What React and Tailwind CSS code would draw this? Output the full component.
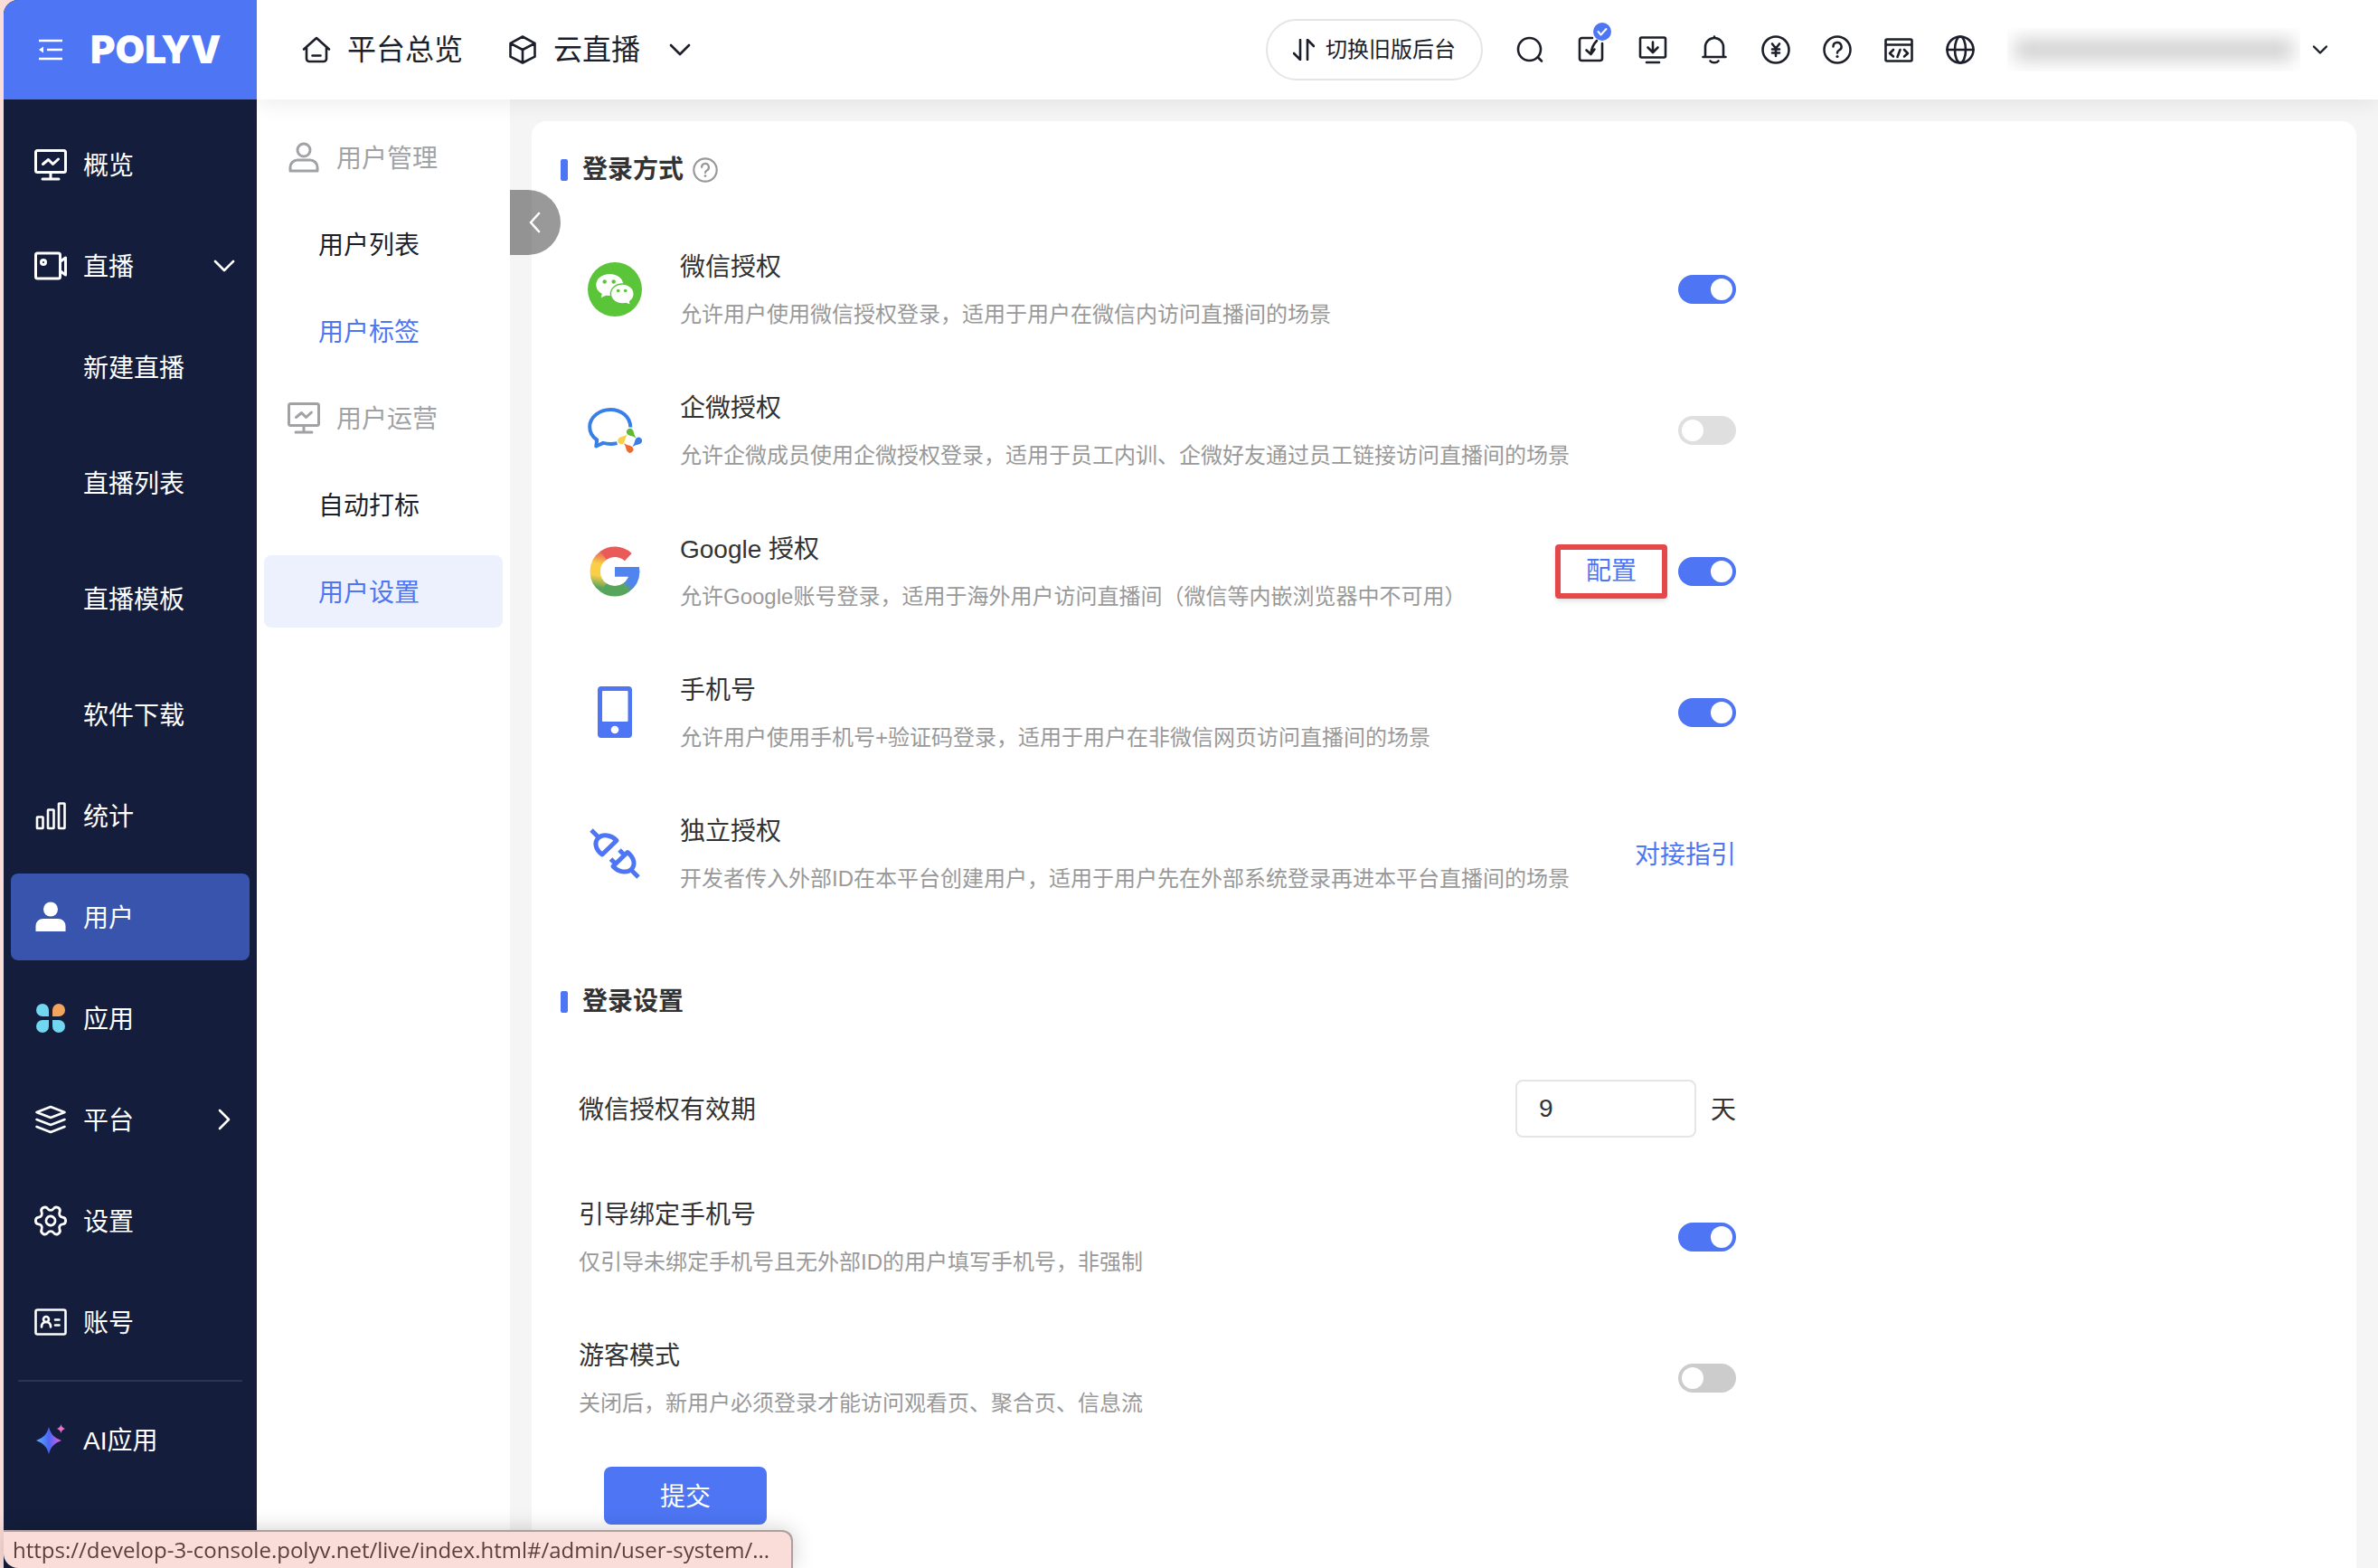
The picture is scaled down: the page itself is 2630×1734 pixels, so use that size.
import React from 'react';
import { Settings } from 'lucide-react';

const Icon = ({ size = 36, className = '', strokeWidth = 3, children }) => (
  <svg
    viewBox={`0 0 ${size} ${size}`}
    width={size}
    height={size}
    fill="none"
    stroke="currentColor"
    strokeWidth={strokeWidth}
    strokeLinecap="round"
    strokeLinejoin="round"
    className={`shrink-0 ${className}`}
    aria-hidden="true"
  >
    {children}
  </svg>
);

const BoardIcon = () => (
  <Icon>
    <rect x="1.5" y="2.5" width="33" height="24" rx="2" />
    <path d="M9.5 17.5l6-5 5 5 6-5.500M18 27v6M9 34h18" />
  </Icon>
);

const LiveIcon = () => (
  <Icon>
    <rect x="1.500" y="4" width="27" height="28" rx="2" />
    <circle cx="10" cy="14" r="2.500" />
    <path d="M29 13l5.500-4v19L29 24" />
  </Icon>
);

const StatsIcon = () => (
  <Icon strokeWidth={2.6}>
    <rect x="3" y="19.500" width="6.500" height="12.500" rx=".5" />
    <rect x="15" y="11.500" width="6.500" height="20.500" rx=".5" />
    <rect x="27" y="4.500" width="6.500" height="27.500" rx=".5" />
  </Icon>
);

const UserFilledIcon = () => (
  <Icon>
    <g fill="currentColor" stroke="none">
      <circle cx="18" cy="9.500" r="8" />
      <path d="M1.500 34v-6a8 8 0 0 1 8-8h17a8 8 0 0 1 8 8v6z" />
    </g>
  </Icon>
);

const UserIcon = () => (
  <Icon>
    <circle cx="18" cy="10" r="7" />
    <path d="M3 33v-4a8 8 0 0 1 8-8h14a8 8 0 0 1 8 8v4z" />
  </Icon>
);

const AppsIcon = () => (
  <Icon>
    <g stroke="none" fill="#71d6f0">
      <path d="M16 16H9a7 7 0 1 1 7-7z" />
      <path d="M20 16h7a7 7 0 1 0-7-7z" fill="#f2a35e" />
      <path d="M16 20H9a7 7 0 1 0 7 7z" />
      <path d="M20 20h7a7 7 0 1 1-7 7z" />
    </g>
  </Icon>
);

const PlatformIcon = () => (
  <Icon strokeWidth={2.6}>
    <path d="M18 4l15.500 6L18 16 2.500 10z" />
    <path d="M2.500 18L18 24l15.500-6M2.500 26L18 32l15.500-6" />
  </Icon>
);

const SettingIcon = () => (
  <Settings size={40} strokeWidth={1.7} className="-mx-0.5 shrink-0 rotate-30" aria-hidden="true" />
);

const AccountIcon = () => (
  <Icon strokeWidth={2.6}>
    <rect x="1.500" y="4.500" width="33" height="27" rx="2" />
    <circle cx="13" cy="15" r="3" />
    <path d="M8 23.500c0-3.500 2-5.500 5-5.500s5 2 5 5.500M23 15.500h4.500M23 21.500h4.500" />
  </Icon>
);

const AiIcon = () => (
  <Icon>
    <defs>
      <linearGradient id="ai-star" x1="0" y1="0" x2="1" y2="0">
        <stop offset="0" stopColor="#5fb0ff" />
        <stop offset=".5" stopColor="#4a66f5" />
        <stop offset="1" stopColor="#e85be0" />
      </linearGradient>
    </defs>
    <g stroke="none">
      <path d="M16 4c2 8 6 12 14 15-8 3-12 7-14 15-2-8-6-12-14-15C10 16 14 12 16 4z" fill="url(#ai-star)" />
      <path d="M29.500 1c.9 3.200 1.800 4.100 5 5-3.200.9-4.100 1.800-5 5-.9-3.200-1.800-4.100-5-5 3.200-.9 4.100-1.800 5-5z" fill="#ee6fc8" />
    </g>
  </Icon>
);

const ChevronDown = () => (
  <Icon size={24} strokeWidth={2.6}>
    <path d="M2 7l10 10L22 7" />
  </Icon>
);

const ChevronRight = () => (
  <Icon size={24} strokeWidth={2.6}>
    <path d="M7 2l10 10L7 22" />
  </Icon>
);

const QuestionIcon = ({ size = 32, className }) => (
  <svg viewBox="0 0 32 32" width={size} height={size} fill="none" stroke="currentColor" strokeWidth="2.500" strokeLinecap="round" className={className} aria-hidden="true">
    <circle cx="16" cy="16" r="14.500" />
    <path d="M11.500 12.500a4.500 4.500 0 1 1 6.500 4c-1.500.8-2 1.500-2 3" />
    <circle cx="16" cy="23.500" r="1.600" fill="currentColor" stroke="none" />
  </svg>
);

const toolbar = [
  {
    label: '搜索',
    icon: (
      <>
        <circle cx="15.500" cy="15.500" r="12.500" />
        <path d="M25 24.500l4 4" />
      </>
    ),
  },
  {
    label: '待办',
    icon: (
      <>
        <path d="M17 3H5.500A2.500 2.500 0 0 0 3 5.500v20A2.500 2.500 0 0 0 5.500 28h20a2.500 2.500 0 0 0 2.500-2.500V9" />
        <path d="M22 6c-4 4-6 8-6.500 15M10.500 16.500l5 4.500 4-5.500" />
      </>
    ),
    badge: true,
  },
  {
    label: '下载',
    icon: (
      <>
        <rect x="2" y="2.500" width="28" height="22" rx="1.500" />
        <path d="M16 7.500v11M10.500 13.500L16 19l5.500-5.500M9 30h14" />
      </>
    ),
  },
  {
    label: '消息',
    icon: (
      <>
        <path d="M6 24V13a10 10 0 0 1 20 0v11M3.500 24h25" />
        <path d="M11.500 28.500c2 2.300 7 2.300 9 0M16 1.500v1" />
      </>
    ),
  },
  {
    label: '费用',
    icon: (
      <>
        <circle cx="16" cy="16" r="14.500" />
        <path d="M12 9.500l4 5 4-5M16 14.500V23M12 15.500h8M12 19.500h8" />
      </>
    ),
  },
  { label: '帮助', node: <QuestionIcon /> },
  {
    label: '开发',
    icon: (
      <>
        <rect x="1.500" y="4.500" width="29" height="24" rx="1.500" />
        <path d="M2 10.500h28M10 16l-4 4 4 3.500M22 16l4 4-4 3.500M17.500 16l-3 8" />
      </>
    ),
  },
  {
    label: '语言',
    icon: (
      <>
        <circle cx="16" cy="16" r="14.500" />
        <ellipse cx="16" cy="16" rx="6" ry="14.500" />
        <path d="M1.500 16h29" />
      </>
    ),
  },
];

const WechatLogo = () => (
  <Icon size={60}>
    <g stroke="none">
      <circle cx="30" cy="30" r="30" fill="#5bc53a" />
      <path d="M14.700 39.300l1.500-6.300 6 2.800z" fill="#fff" />
      <ellipse cx="24.300" cy="25" rx="15" ry="12" fill="#fff" />
      <ellipse cx="38.300" cy="35" rx="13.600" ry="11.700" fill="#5bc53a" />
      <ellipse cx="38.300" cy="35" rx="12.200" ry="10.300" fill="#fff" />
      <path d="M46.500 46.300l-6-2 5-3z" fill="#fff" />
      <g fill="#5bc53a">
        <circle cx="18.700" cy="21.500" r="2.200" />
        <circle cx="28.700" cy="21.500" r="2.200" />
        <circle cx="33.700" cy="31.500" r="1.800" />
        <circle cx="41.700" cy="31.500" r="1.800" />
      </g>
    </g>
  </Icon>
);

const Drop = ({ x, y, angle, color }) => (
  <path
    d="M-3.700 0a3.700 3.700 0 0 1 7.400 0C3.700 3 1.200 4 0 9.800-1.200 4-3.700 3-3.700 0z"
    transform={`translate(${x} ${y}) rotate(${angle})`}
    fill={color}
    stroke="none"
  />
);

const WecomLogo = () => (
  <Icon size={60}>
    <path
      d="M47.300 26.500C47 14.500 37 7 25 7S2.200 15.500 2.200 26c0 6 3 11 8 14.500L9.300 47.500l7.700-3.600c5.500 1.300 10.500 1.300 15.500.2"
      stroke="#3880e8"
      strokeWidth="4"
      strokeLinecap="butt"
    />
    <Drop x={46.7} y={31.7} angle={-45} color="#5fba33" />
    <Drop x={56.3} y={41.3} angle={45} color="#3880e8" />
    <Drop x={46.7} y={51} angle={135} color="#ed6c2b" />
    <Drop x={37} y={41.3} angle={-135} color="#f9cf48" />
  </Icon>
);

const GoogleLogo = () => (
  <Icon size={60}>
    <defs>
      <linearGradient id="g-left" gradientUnits="userSpaceOnUse" x1="30" y1="10" x2="22" y2="50">
        <stop offset="0" stopColor="#ea5a59" />
        <stop offset=".36" stopColor="#f9cf48" />
        <stop offset=".68" stopColor="#f9cf48" />
        <stop offset="1" stopColor="#57a45c" />
      </linearGradient>
      <linearGradient id="g-right" gradientUnits="userSpaceOnUse" x1="41" y1="50" x2="47" y2="43">
        <stop offset="0" stopColor="#57a45c" />
        <stop offset="1" stopColor="#5084ee" />
      </linearGradient>
    </defs>
    <g strokeWidth="11.400" strokeLinecap="butt">
      <path d="M17.500 12.200A21.700 21.700 0 0 0 17.500 47.800" stroke="url(#g-left)" />
      <path d="M44.800 14.100A21.700 21.700 0 0 0 17.200 12.400" stroke="#ea5a59" />
      <path d="M17.200 47.600A21.700 21.700 0 0 0 42.700 47.600" stroke="#57a45c" />
      <path d="M42.400 47.800A21.700 21.700 0 0 0 51.700 30" stroke="url(#g-right)" />
    </g>
    <path d="M30 25h26.900l.5 5.500-5.400 5.200H30z" fill="#5084ee" stroke="none" />
  </Icon>
);

const PhoneLogo = () => (
  <Icon size={60}>
    <g stroke="none">
      <rect x="11" y="1" width="38" height="57" rx="4" fill="#4e76f4" />
      <rect x="16" y="6" width="28.500" height="34" rx="1" fill="#fff" />
      <circle cx="30" cy="49" r="4.300" fill="#fff" />
    </g>
  </Icon>
);

const PlugLogo = () => (
  <Icon size={60} className="text-[#4e76f4]" strokeWidth={5}>
    <g strokeLinecap="butt">
      <path d="M4 4l7 7" />
      <path d="M16 31L32 15.500C26 9.500 17 8 12 12.500 7 17 8 25 16 31z" />
      <path d="M44 28.500L28 44C34 50.500 43 52 48 47.500 53 43 52 35 44 28.500z" />
      <path d="M49 49l7 7M35 26l6 6M25.500 36l6 6" />
    </g>
  </Icon>
);

const mainMenu = [
  { label: '概览', icon: <BoardIcon /> },
  {
    label: '直播',
    icon: <LiveIcon />,
    arrow: <ChevronDown />,
    children: ['新建直播', '直播列表', '直播模板', '软件下载'],
  },
  { label: '统计', icon: <StatsIcon /> },
  { label: '用户', icon: <UserFilledIcon />, active: true },
  { label: '应用', icon: <AppsIcon /> },
  { label: '平台', icon: <PlatformIcon />, arrow: <ChevronRight /> },
  { label: '设置', icon: <SettingIcon /> },
  { label: '账号', icon: <AccountIcon /> },
];

const loginMethods = [
  {
    id: 'wechat',
    logo: <WechatLogo />,
    title: '微信授权',
    desc: '允许用户使用微信授权登录，适用于用户在微信内访问直播间的场景',
    checked: true,
  },
  {
    id: 'wecom',
    logo: <WecomLogo />,
    title: '企微授权',
    desc: '允许企微成员使用企微授权登录，适用于员工内训、企微好友通过员工链接访问直播间的场景',
    checked: false,
    disabled: true,
  },
  {
    id: 'google',
    logo: <GoogleLogo />,
    title: 'Google 授权',
    desc: '允许Google账号登录，适用于海外用户访问直播间（微信等内嵌浏览器中不可用）',
    checked: true,
    config: true,
  },
  {
    id: 'phone',
    logo: <PhoneLogo />,
    title: '手机号',
    desc: '允许用户使用手机号+验证码登录，适用于用户在非微信网页访问直播间的场景',
    checked: true,
  },
  {
    id: 'custom',
    logo: <PlugLogo />,
    title: '独立授权',
    desc: '开发者传入外部ID在本平台创建用户，适用于用户先在外部系统登录再进本平台直播间的场景',
    guide: true,
  },
];

const Switch = ({ id, checked, disabled }) => (
  <input
    id={id}
    type="checkbox"
    role="switch"
    defaultChecked={checked}
    disabled={disabled}
    className="h-8 w-16 shrink-0 appearance-none rounded-full bg-[#ccc] transition before:m-1 before:block before:size-6 before:rounded-full before:bg-white checked:bg-[#4e76f4] checked:before:translate-x-8 disabled:bg-[#dfdfdf]"
  />
);

const SectionTitle = ({ children }) => (
  <h2 className="flex h-11 items-center text-[28px] font-semibold text-[#333]">
    <span className="mr-4 h-6 w-2 rounded-xs bg-[#4e76f4]" />
    {children}
  </h2>
);

const RowText = ({ id, title, desc }) => (
  <div className="flex flex-1 flex-col gap-4">
    <label htmlFor={id} className="text-[28px] leading-10 text-[#333]">{title}</label>
    <p className="text-2xl leading-8 text-[#999]">{desc}</p>
  </div>
);

const MenuLink = ({ icon, arrow, active, label }) => (
  <a
    href="#"
    className={`flex h-24 items-center rounded-lg pr-4 ${icon ? 'gap-[18px] pl-[26px]' : 'pl-20'} ${active ? 'bg-[#3854ad]' : ''}`}
  >
    {icon}
    <span className="flex-1 pt-[3px]">{label}</span>
    {arrow}
  </a>
);

const SubMenuTitle = ({ icon, label }) => (
  <h3 className="flex h-20 items-center gap-[18px] pl-[26px] text-[#a0a2a6]">
    {icon}
    <span className="pt-[3px]">{label}</span>
  </h3>
);

const SubMenuLink = ({ label, className = '' }) => (
  <a href="#" className={`flex h-20 items-center rounded-lg pt-[3px] pl-15 ${className}`}>{label}</a>
);

const Sidebar = () => (
  <aside className="relative z-20 w-[280px] shrink-0 bg-[#141e3c] text-white">
    <div className="flex h-[110px] items-center gap-6 bg-[#4e76f4] pl-9">
      <button type="button" aria-label="收起菜单">
        <Icon strokeWidth={2.4}>
          <path d="M3 8h26M12 18h17M3 28h26" strokeLinecap="butt" />
          <path d="M3 18l5-3.500v7z" fill="currentColor" stroke="none" />
        </Icon>
      </button>
      <a href="#" className="font-[Inter] text-[42px] leading-none font-black">POLYV</a>
    </div>
    <nav className="flex flex-col gap-4 px-2 pt-6 text-[28px]">
      {mainMenu.map((item) => (
        <React.Fragment key={item.label}>
          <MenuLink {...item} />
          {item.children && (
            <div className="flex flex-col gap-8">
              {item.children.map((child) => (
                <MenuLink key={child} label={child} />
              ))}
            </div>
          )}
        </React.Fragment>
      ))}
      <hr className="mx-2 border-t-2 border-white/10" />
      <MenuLink icon={<AiIcon />} label="AI应用" />
    </nav>
  </aside>
);

const Header = () => (
  <header className="relative z-10 flex h-[110px] items-center bg-white pr-14 pl-[50px] text-[#1c1f2a] shadow-[0_4px_24px_rgba(0,0,0,0.08)]">
    <a href="#" className="flex items-center gap-[18px] text-[32px]">
      <Icon size={32} strokeWidth={2.6}>
        <path d="M2 15.500L16 3l14 12.500M5 13.500V26a3 3 0 0 0 3 3h16a3 3 0 0 0 3-3V13.500M11.500 22.500h9" />
      </Icon>
      平台总览
    </a>
    <button type="button" className="ml-[50px] flex items-center gap-[18px] text-[32px]">
      <Icon size={32} strokeWidth={2.6}>
        <path d="M16 1.500l13.500 7.300v14.900L16 30.500 2.500 23.700V8.800zM2.500 8.800L16 16l13.500-7.200M16 16v14.500" />
      </Icon>
      云直播
      <span className="ml-3.5"><ChevronDown /></span>
    </button>

    <div className="ml-auto flex items-center gap-9">
      <button type="button" className="flex h-[68px] items-center gap-3 rounded-full border-2 border-[#e5e5e5] px-7 text-2xl">
        <Icon size={24} strokeWidth={2.6}>
          <path d="M1 16l7 7V1M16 23V1l7 7" />
        </Icon>
        切换旧版后台
      </button>
      {toolbar.map(({ label, icon, node, badge }) => (
        <button key={label} type="button" aria-label={label} className="relative">
          {node || <Icon size={32} strokeWidth={2.6}>{icon}</Icon>}
          {badge && (
            <span className="absolute -top-3.5 -right-1.5 flex size-5 items-center justify-center rounded-full bg-[#4e76f4] text-white">
              <Icon size={12} strokeWidth={2}>
                <path d="M1.500 6l3 3.500 6-6.500" />
              </Icon>
            </span>
          )}
        </button>
      ))}
      <button type="button" aria-label="账号菜单" className="flex items-center gap-3.5">
        <span className="flex h-12 w-[324px] items-center overflow-hidden">
          <span className="mx-2 h-6 flex-1 bg-[#d0d0d0] blur-[10px]" />
        </span>
        <Icon size={16} strokeWidth={2.4}>
          <path d="M1 4.500l7 7 7-7" />
        </Icon>
      </button>
    </div>
  </header>
);

const SubMenu = () => (
  <nav className="flex w-[280px] shrink-0 flex-col gap-4 bg-white px-2 pt-6 text-[28px] text-[#1c1f2a]">
    <SubMenuTitle icon={<UserIcon />} label="用户管理" />
    <SubMenuLink label="用户列表" />
    <SubMenuLink label="用户标签" className="text-[#4e76f4]" />
    <SubMenuTitle icon={<BoardIcon />} label="用户运营" />
    <SubMenuLink label="自动打标" />
    <SubMenuLink label="用户设置" className="bg-[#edf1fe] text-[#4e76f4]" />
  </nav>
);

const LoginMethods = () => (
  <section>
    <SectionTitle>
      登录方式
      <QuestionIcon size={28} className="ml-2.5 text-[#999]" />
    </SectionTitle>
    <div className="mt-8 ml-5 max-w-[1280px]">
      {loginMethods.map((item) => (
        <div key={item.id} className="flex items-center py-[34px] pl-2.5">
          <div className="mr-[42px]">{item.logo}</div>
          <RowText id={item.id} title={item.title} desc={item.desc} />
          {item.config && (
            <button type="button" className="-my-1 mr-3 h-[60px] w-[124px] rounded-sm border-6 border-[#e5484b] text-[28px] leading-none text-[#4e76f4] shadow-md">
              配置
            </button>
          )}
          {item.guide ? (
            <a id={item.id} href="#" className="pt-[3px] text-[28px] text-[#4e76f4]">对接指引</a>
          ) : (
            <Switch id={item.id} checked={item.checked} disabled={item.disabled} />
          )}
        </div>
      ))}
    </div>
  </section>
);

const LoginSettings = () => (
  <section className="mt-16">
    <SectionTitle>登录设置</SectionTitle>
    <div className="mt-8 ml-5 max-w-[1280px]">
      <div className="flex items-center py-8 text-[28px] text-[#333]">
        <label htmlFor="expire" className="flex-1 pt-[3px]">微信授权有效期</label>
        <input
          id="expire"
          type="text"
          defaultValue="9"
          className="mr-4 h-16 w-[200px] rounded-lg border-2 border-[#e5e5e5] px-6"
        />
        <span className="pt-[3px]">天</span>
      </div>
      <div className="flex items-center py-[34px]">
        <RowText id="bind" title="引导绑定手机号" desc="仅引导未绑定手机号且无外部ID的用户填写手机号，非强制" />
        <Switch id="bind" checked />
      </div>
      <div className="flex items-center py-[34px]">
        <RowText id="guest" title="游客模式" desc="关闭后，新用户必须登录才能访问观看页、聚合页、信息流" />
        <Switch id="guest" />
      </div>
    </div>
    <button type="submit" className="mt-5 ml-12 h-16 w-[180px] rounded-lg bg-[#4e76f4] pt-[3px] text-[28px] text-white">
      提交
    </button>
  </section>
);

const App = () => (
  <div className="min-h-screen bg-[#fadcd8] pl-1 font-['Liberation_Sans','Noto_Sans_CJK_SC',sans-serif]">
    <div className="flex min-h-screen overflow-hidden rounded-tl-2xl bg-[#f5f5f5]">
      <Sidebar />
      <div className="flex min-w-0 flex-1 flex-col">
        <Header />
        <div className="flex flex-1">
          <SubMenu />
          <main className="relative flex flex-1 px-6 pt-6">
            <button
              type="button"
              aria-label="收起"
              className="absolute top-[100px] left-0 flex h-[72px] w-14 items-center justify-center rounded-r-full bg-black/40 text-white"
            >
              <Icon size={24} strokeWidth={2.6}>
                <path d="M16 2L7 12l9 10" />
              </Icon>
            </button>
            <div className="flex-1 rounded-t-2xl bg-white px-8 pt-8 pb-12">
              <LoginMethods />
              <LoginSettings />
            </div>
          </main>
        </div>
      </div>
    </div>
    <div className="fixed bottom-0 left-1 z-30 h-[42px] rounded-tr-xl rounded-bl-2xl border-t-2 border-r-2 border-[#a9a09f] bg-[#fadcd8] pr-6 pl-2.5 font-['Open_Sans',sans-serif] text-2xl leading-10 text-[#5c403d] shadow-[0_0_24px_rgba(0,0,0,0.2)]">
      https://develop-3-console.polyv.net/live/index.html#/admin/user-system/...
    </div>
  </div>
);

export default App;
